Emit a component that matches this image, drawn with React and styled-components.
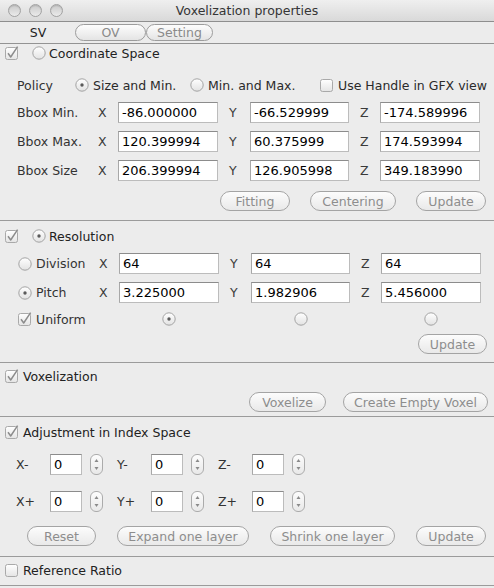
import React from 'react';
import styled, { createGlobalStyle } from 'styled-components';

const Global = createGlobalStyle`
  html, body { margin: 0; padding: 0; background: #ececec; }
  body { font-family: "DejaVu Sans", "Liberation Sans", sans-serif; font-size: 12.5px; color: #262626; }
  * { box-sizing: border-box; }
`;

const Window = styled.div`
  width: 494px;
  height: 588px;
  background: #ececec;
  display: flex;
  flex-direction: column;
  overflow: hidden;
`;

const TitleBar = styled.div`
  height: 22px;
  flex: none;
  display: grid;
  grid-template-columns: 1fr auto 1fr;
  align-items: center;
  background: linear-gradient(#efefef, #d9d9d9);
  border-bottom: 1px solid #8e8e8e;
`;

const Lights = styled.div`
  display: flex;
  gap: 8px;
  padding-left: 8px;
`;

const Light = styled.span`
  width: 13px;
  height: 13px;
  border-radius: 50%;
  border: 1px solid #a2a2a2;
  background: linear-gradient(#c9c9c9, #ebebeb);
  box-shadow: inset 0 1px 1px rgba(0, 0, 0, 0.12);
`;

const Title = styled.div`
  font-size: 12.5px;
  color: #353535;
  white-space: nowrap;
`;

const TabBar = styled.div`
  height: 22px;
  flex: none;
  display: flex;
  align-items: center;
  padding-left: 4px;
  border-bottom: 1px solid #939393;
`;

const Tab = styled.div`
  width: ${p => p.$w}px;
  height: 17px;
  margin-left: ${p => p.$ml ?? 0}px;
  display: flex;
  align-items: center;
  justify-content: center;
  font-size: 12.5px;
  color: ${p => (p.$active ? '#1f1f1f' : '#8a8a8a')};
  border-radius: 9px;
  border: 1px solid ${p => (p.$active ? 'transparent' : '#9c9c9c')};
  background: ${p => (p.$active ? 'transparent' : 'linear-gradient(#fdfdfd, #e4e4e4)')};
`;

const Section = styled.section`
  flex: none;
  display: flex;
  flex-direction: column;
  padding-bottom: ${p => p.$pb}px;
  border-bottom: 1px solid #9b9b9b;
`;

const HeaderRow = styled.div`
  height: 16px;
  margin-top: ${p => p.$mt}px;
  display: flex;
  align-items: center;
  padding-left: 5px;
`;

const HeaderText = styled.span`
  margin-left: ${p => p.$ml ?? 4}px;
  color: #222;
  white-space: nowrap;
`;

const Mark = styled.span`
  display: inline-flex;
  width: 14px;
  height: 14px;
  flex: none;
  margin-left: ${p => p.$ml ?? 0}px;
  justify-self: ${p => p.$center ? 'center' : 'auto'};
  grid-column: ${p => p.$col ?? 'auto'};
`;

const PolicyRow = styled.div`
  height: 20px;
  margin-top: ${p => p.$mt}px;
  display: flex;
  align-items: center;
  padding-left: 17px;
`;

const PolicyLabel = styled.span`
  width: 58px;
  color: #333;
`;

const Option = styled.label`
  display: flex;
  align-items: center;
  width: ${p => (p.$w ? `${p.$w}px` : 'auto')};
  color: #2a2a2a;
  white-space: nowrap;
`;

const OptionText = styled.span`
  margin-left: 4px;
`;

const AxisGrid = styled.div`
  display: grid;
  grid-template-columns: 81px 20px 100px 11px 21px 99px 11px 20px 100px;
  grid-auto-rows: ${p => p.$h ?? 21}px;
  row-gap: 8px;
  align-items: center;
  padding-left: ${p => p.$pl}px;
  margin-top: ${p => p.$mt}px;
`;

const RowLabel = styled.span`
  color: #333;
  white-space: nowrap;
  display: flex;
  align-items: center;
`;

const Axis = styled.span`
  color: #3a3a3a;
  grid-column: ${p => p.$col};
`;

const TextField = styled.input`
  width: 100%;
  height: 21px;
  margin: 0;
  padding: 0 3px;
  border: 1px solid #bcbcbc;
  border-top-color: #8c8c8c;
  border-left-color: #a8a8a8;
  border-radius: 0;
  background: #fff;
  font-family: "DejaVu Sans", "Liberation Sans", sans-serif;
  font-size: 13px;
  color: #000;
  outline: none;
  grid-column: ${p => p.$col ?? 'auto'};
`;

const ButtonRow = styled.div`
  height: 20px;
  margin-top: ${p => p.$mt}px;
  display: flex;
  justify-content: ${p => p.$justify ?? 'flex-end'};
  gap: ${p => p.$gap ?? 20}px;
  padding-left: ${p => p.$pl ?? 0}px;
  padding-right: ${p => p.$pr ?? 0}px;
`;

const PushButton = styled.button`
  width: ${p => p.$w}px;
  height: 20px;
  margin: 0;
  padding: 0;
  border: 1px solid #a4a4a4;
  border-radius: 10px;
  background: linear-gradient(#fcfcfc, #e9e9e9);
  font-family: "DejaVu Sans", "Liberation Sans", sans-serif;
  font-size: 12.5px;
  color: #8d8d8d;
  white-space: nowrap;
`;

const AdjRow = styled.div`
  height: 21px;
  margin-top: ${p => p.$mt}px;
  display: flex;
  align-items: center;
  gap: 14px;
  padding-left: 16px;
`;

const AdjGroup = styled.div`
  display: flex;
  align-items: center;
`;

const AdjLabel = styled.span`
  width: 34px;
  color: #333;
`;

const SmallField = styled(TextField)`
  width: 32px;
`;

const Stepper = styled.span`
  display: inline-flex;
  width: 13px;
  height: 21px;
  margin-left: 8px;
`;

const CheckIcon = ({ checked }) => (
  <svg width="14" height="14" viewBox="0 0 14 14">
    <defs>
      <linearGradient id="cbg" x1="0" y1="0" x2="0" y2="1">
        <stop offset="0" stopColor="#ffffff" />
        <stop offset="1" stopColor="#e4e4e4" />
      </linearGradient>
    </defs>
    <rect x="0.5" y="1.5" width="12" height="12" rx="2" fill="url(#cbg)" stroke="#a9a9a9" />
    {checked && (
      <path d="M3 7.3 L5.7 11 L12.6 0.6" fill="none" stroke="#8c8c8c" strokeWidth="1.5" strokeLinejoin="round" />
    )}
  </svg>
);

const RadioIcon = ({ on }) => (
  <svg width="14" height="14" viewBox="0 0 14 14">
    <defs>
      <linearGradient id="rbg" x1="0" y1="0" x2="0" y2="1">
        <stop offset="0" stopColor="#ffffff" />
        <stop offset="1" stopColor="#e2e2e2" />
      </linearGradient>
    </defs>
    <circle cx="7" cy="7" r="6.2" fill="url(#rbg)" stroke="#a3a3a3" />
    {on && <circle cx="7" cy="7" r="1.7" fill="#5a5a5a" />}
  </svg>
);

const StepperIcon = () => (
  <svg width="13" height="21" viewBox="0 0 13 21">
    <defs>
      <linearGradient id="sbg" x1="0" y1="0" x2="0" y2="1">
        <stop offset="0" stopColor="#fdfdfd" />
        <stop offset="1" stopColor="#e8e8e8" />
      </linearGradient>
    </defs>
    <rect x="0.5" y="0.5" width="12" height="20" rx="5.5" fill="url(#sbg)" stroke="#ababab" />
    <polygon points="4.5,8 8.5,8 6.5,5" fill="#8a8a8a" />
    <polygon points="4.5,13 8.5,13 6.5,16" fill="#8a8a8a" />
  </svg>
);

const Check = ({ checked, ml }) => (
  <Mark $ml={ml}><CheckIcon checked={checked} /></Mark>
);
const Radio = ({ on, ml, col, center }) => (
  <Mark $ml={ml} $col={col} $center={center}><RadioIcon on={on} /></Mark>
);

const bbox = [
  ['Bbox Min.', '-86.000000', '-66.529999', '-174.589996'],
  ['Bbox Max.', '120.399994', '60.375999', '174.593994'],
  ['Bbox Size', '206.399994', '126.905998', '349.183990'],
];

const AxisFields = ({ x, y, z }) => (
  <>
    <Axis $col={2}>X</Axis>
    <TextField $col={3} readOnly value={x} />
    <Axis $col={5}>Y</Axis>
    <TextField $col={6} readOnly value={y} />
    <Axis $col={8}>Z</Axis>
    <TextField $col={9} readOnly value={z} />
  </>
);

const AdjLine = ({ sign, mt }) => (
  <AdjRow $mt={mt}>
    {['X', 'Y', 'Z'].map(a => (
      <AdjGroup key={a}>
        <AdjLabel>{a}{sign}</AdjLabel>
        <SmallField readOnly value="0" />
        <Stepper><StepperIcon /></Stepper>
      </AdjGroup>
    ))}
  </AdjRow>
);

export default function App() {
  return (
    <>
      <Global />
      <Window>
        <TitleBar>
          <Lights>
            <Light />
            <Light />
            <Light />
          </Lights>
          <Title>Voxelization properties</Title>
          <div />
        </TitleBar>
        <TabBar>
          <Tab $w={68} $active>SV</Tab>
          <Tab $w={71} $ml={3}>OV</Tab>
          <Tab $w={67}>Setting</Tab>
        </TabBar>

        <Section $pb={9}>
          <HeaderRow $mt={1}>
            <Check checked />
            <Radio ml={13} />
            <HeaderText $ml={3}>Coordinate Space</HeaderText>
          </HeaderRow>
          <PolicyRow $mt={14}>
            <PolicyLabel>Policy</PolicyLabel>
            <Option $w={115}><RadioIcon on /><OptionText>Size and Min.</OptionText></Option>
            <Option $w={130}><RadioIcon /><OptionText>Min. and Max.</OptionText></Option>
            <Option><CheckIcon /><OptionText>Use Handle in GFX view</OptionText></Option>
          </PolicyRow>
          <AxisGrid $pl={17} $mt={7}>
            {bbox.map(([label, x, y, z]) => (
              <React.Fragment key={label}>
                <RowLabel>{label}</RowLabel>
                <AxisFields x={x} y={y} z={z} />
              </React.Fragment>
            ))}
          </AxisGrid>
          <ButtonRow $mt={10} $pr={8}>
            <PushButton $w={70}>Fitting</PushButton>
            <PushButton $w={86}>Centering</PushButton>
            <PushButton $w={70}>Update</PushButton>
          </ButtonRow>
        </Section>

        <Section $pb={8}>
          <HeaderRow $mt={7}>
            <Check checked />
            <Radio ml={13} on />
            <HeaderText $ml={3}>Resolution</HeaderText>
          </HeaderRow>
          <AxisGrid $pl={18} $mt={9}>
            <RowLabel><RadioIcon /><OptionText>Division</OptionText></RowLabel>
            <AxisFields x="64" y="64" z="64" />
            <RowLabel><RadioIcon on /><OptionText>Pitch</OptionText></RowLabel>
            <AxisFields x="3.225000" y="1.982906" z="5.456000" />
          </AxisGrid>
          <AxisGrid $pl={18} $mt={8} $h={16}>
            <RowLabel><CheckIcon checked /><OptionText>Uniform</OptionText></RowLabel>
            <Radio col={3} center on />
            <Radio col={6} center />
            <Radio col={9} center />
          </AxisGrid>
          <ButtonRow $mt={7} $pr={7}>
            <PushButton $w={69}>Update</PushButton>
          </ButtonRow>
        </Section>

        <Section $pb={4}>
          <HeaderRow $mt={5}>
            <Check checked />
            <HeaderText>Voxelization</HeaderText>
          </HeaderRow>
          <ButtonRow $mt={8} $pr={6} $gap={17}>
            <PushButton $w={77}>Voxelize</PushButton>
            <PushButton $w={145}>Create Empty Voxel</PushButton>
          </ButtonRow>
        </Section>

        <Section $pb={10}>
          <HeaderRow $mt={7}>
            <Check checked />
            <HeaderText>Adjustment in Index Space</HeaderText>
          </HeaderRow>
          <AdjLine sign="-" mt={14} />
          <AdjLine sign="+" mt={16} />
          <ButtonRow $mt={14} $justify="flex-start" $pl={27} $gap={21}>
            <PushButton $w={69}>Reset</PushButton>
            <PushButton $w={132}>Expand one layer</PushButton>
            <PushButton $w={125}>Shrink one layer</PushButton>
            <PushButton $w={70}>Update</PushButton>
          </ButtonRow>
        </Section>

        <Section $pb={7}>
          <HeaderRow $mt={5}>
            <Check />
            <HeaderText>Reference Ratio</HeaderText>
          </HeaderRow>
        </Section>
      </Window>
    </>
  );
}
